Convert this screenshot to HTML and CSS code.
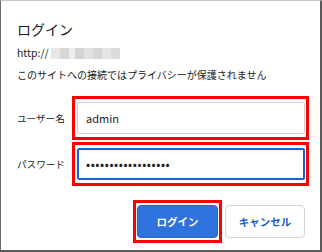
FILE: index.html
```html
<!DOCTYPE html>
<html lang="ja">
<head>
<meta charset="utf-8">
<link rel="stylesheet" href="styles.css">
</head>
<body>
<div class="dialog">
  <div class="title">ログイン</div>
  <div class="url">http://<span class="blur"><i class="b1"></i><i class="b2"></i><i class="b3"></i><i class="b4"></i><i class="b5"></i><i class="b6"></i><i class="b7"></i><i class="b8"></i></span></div>
  <div class="warn">このサイトへの接続ではプライバシーが保護されません</div>
  <div class="form">
    <label class="label">ユーザー名</label>
    <div class="mark"><div class="field">admin</div></div>
    <label class="label">パスワード</label>
    <div class="mark"><div class="field focus">••••••••••••••••••</div></div>
  </div>
  <div class="actions">
    <div class="mark btnmark"><button class="btn primary">ログイン</button></div>
    <button class="btn secondary">キャンセル</button>
  </div>
</div>
</body>
</html>
```
FILE: styles.css
```css
html, body {
  margin: 0;
  padding: 0;
  background: #fff;
}
body {
  width: 322px;
  height: 252px;
  overflow: hidden;
  font-family: "Noto Sans CJK JP", "Noto Sans", sans-serif;
  color: #202124;
}
.dialog {
  box-sizing: border-box;
  width: 322px;
  height: 252px;
  border-top: 1px solid #c8c8c8;
  border-left: 1px solid #6a6a6a;
  border-right: 2px solid #5a5a5a;
  border-bottom: 2px solid #5a5a5a;
  padding: 0 11px 0 16px;
  display: flex;
  flex-direction: column;
}
.title {
  margin-top: 18px;
  font-size: 14px;
  line-height: 20px;
}
.url {
  margin-top: 6px;
  font-size: 10.5px;
  line-height: 16px;
  display: flex;
  align-items: center;
}
.blur {
  display: inline-flex;
  margin-left: 2px;
  height: 11px;
}
.blur i {
  display: block;
  width: 9px;
  height: 11px;
}
.b1 { background: #e8e8e8; }
.b2 { background: #d8d8d8; }
.b3 { background: #eeeeee; width: 6px !important; }
.b4 { background: #d4d4d4; }
.b5 { background: #e2e2e2; }
.b6 { background: #d6d6d6; }
.b7 { background: #e6e6e6; }
.b8 { background: #dcdcdc; }
.warn {
  margin-top: 6px;
  font-size: 10px;
  line-height: 16px;
}
.form {
  margin-top: 13px;
  display: grid;
  grid-template-columns: 55px 1fr;
  row-gap: 2px;
  align-items: center;
}
.label {
  font-size: 9.6px;
  line-height: 14px;
}
.mark {
  border: 3px solid #f00;
  padding: 3px 1px 3px 2px;
}
.field {
  box-sizing: border-box;
  height: 32px;
  border: 1px solid #cfcfcf;
  border-radius: 2px;
  padding: 0 8px;
  font-size: 11px;
  line-height: 30px;
  color: #202124;
}
.field.focus {
  border: 2px solid #1a5fd6;
  line-height: 28px;
  padding: 0 7px;
  font-size: 12px;
  letter-spacing: 0.6px;
}
.actions {
  margin-top: 14px;
  display: flex;
  justify-content: flex-end;
  align-items: center;
  gap: 3px;
  padding-right: 4px;
}
.btnmark {
  padding: 2px 1px;
}
.btn {
  box-sizing: border-box;
  height: 33px;
  border-radius: 4px;
  font-family: "Noto Sans CJK JP", sans-serif;
  font-size: 10.5px;
  font-weight: bold;
  margin: 0;
  padding: 0;
}
.primary {
  width: 81px;
  background: #2f72de;
  border: 1px solid #2a66c8;
  color: #fff;
}
.secondary {
  width: 80px;
  background: #fff;
  border: 1px solid #d6d6d6;
  color: #1d5bd0;
}
```
